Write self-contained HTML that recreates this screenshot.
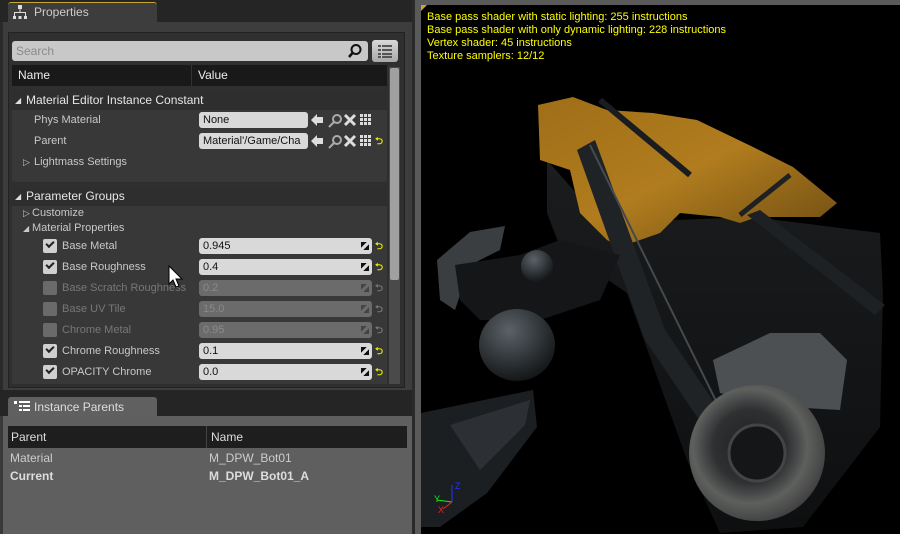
<!DOCTYPE html>
<html><head><meta charset="utf-8"><style>
*{margin:0;padding:0;box-sizing:border-box}
body{width:900px;height:534px;background:#252525;position:relative;overflow:hidden;font-family:"Liberation Sans",sans-serif;font-size:11px;color:#c8c8c8}
.a{position:absolute}
.lbl{position:absolute;white-space:nowrap;line-height:14px}
.vb{position:absolute;background:#d9d9d9;border-radius:3px;color:#111;padding-left:4px;line-height:16px;height:16px;font-size:11px;overflow:hidden;white-space:nowrap}
.vb.d{background:#6b6b6b;color:#8a8a8a}
.cb{position:absolute;width:14px;height:14px;background:#d0d0d0;border-radius:2px}
.cb.d{background:#6a6a6a}
.cb i{position:absolute;left:3px;top:2px;width:8px;height:5px;border-left:2px solid #222;border-bottom:2px solid #222;transform:rotate(-45deg)}
.sp{position:absolute;right:3px;top:4px;width:8px;height:8px;background:linear-gradient(135deg,#111 0 35%,transparent 35% 65%,#111 65%)}
.d .sp{background:linear-gradient(135deg,#444 0 35%,transparent 35% 65%,#444 65%)}
.rs{position:absolute;color:#e8e800;font-size:10px;font-weight:bold}
.rs.d{color:#777}
</style></head><body>
<div class="a" style="left:8px;top:2px;width:149px;height:21px;background:#3d3d3d;border-top:1px solid #c8a832;border-radius:3px 3px 0 0"></div>
<svg class="a" style="left:12px;top:4px" width="16" height="16"><rect x="6" y="1" width="4" height="4" fill="#ddd"/><rect x="7.5" y="5" width="1" height="4" fill="#ddd"/><rect x="2" y="8" width="12" height="1" fill="#ddd"/><rect x="2" y="8" width="1" height="4" fill="#ddd"/><rect x="13" y="8" width="1" height="4" fill="#ddd"/><rect x="1" y="12" width="3" height="3" fill="#ddd"/><rect x="6.5" y="12" width="3" height="3" fill="#ddd"/><rect x="12" y="12" width="3" height="3" fill="#ddd"/></svg>
<div class="lbl" style="left:34px;top:5px;font-size:12px;color:#ccc">Properties</div>
<div class="a" style="left:0;top:22px;width:412px;height:368px;background:#3d3d3d;border-left:3px solid #2a2a2a"></div>
<div class="a" style="left:8px;top:32px;width:397px;height:356px;background:#2f2f2f;border:1px solid #222"></div>
<div class="a" style="left:12px;top:41px;width:356px;height:20px;background:#c8c8c8;border-radius:3px"></div>
<div class="lbl" style="left:16px;top:44px;color:#8a8a8a;font-size:12px">Search</div>
<svg class="a" style="left:347px;top:43px" width="16" height="16"><circle cx="9" cy="6.5" r="4.5" fill="none" stroke="#111" stroke-width="2"/><line x1="5.5" y1="10" x2="2" y2="14" stroke="#111" stroke-width="2.5"/></svg>
<div class="a" style="left:372px;top:40px;width:26px;height:22px;background:linear-gradient(#d8d8d8,#a8a8a8);border-radius:3px"></div>
<svg class="a" style="left:378px;top:44px" width="14" height="14"><g fill="#555"><rect x="0" y="1" width="14" height="2"/><rect x="0" y="5" width="14" height="2"/><rect x="0" y="9" width="14" height="2"/><rect x="0" y="12" width="14" height="2"/></g><rect x="3" y="0" width="1" height="14" fill="#ccc"/></svg>
<div class="a" style="left:12px;top:65px;width:375px;height:21px;background:#191919"></div>
<div class="a" style="left:191px;top:65px;width:1px;height:21px;background:#333"></div>
<div class="lbl" style="left:18px;top:68px;color:#eee;font-size:12px">Name</div>
<div class="lbl" style="left:198px;top:68px;color:#eee;font-size:12px">Value</div>
<div class="a" style="left:389px;top:67px;width:11px;height:317px;background:#4a4a4a"></div>
<div class="a" style="left:390px;top:68px;width:9px;height:212px;background:#a0a0a0;border-radius:2px"></div>
<div class="a" style="left:12px;top:90px;width:375px;height:92px;background:#383838;border-radius:3px"></div>
<div class="a" style="left:12px;top:90px;width:375px;height:20px;background:#2e2e2e;border-radius:3px 3px 0 0"></div>
<div class="lbl" style="left:15px;top:94px;font-size:8px;color:#ddd">◢</div>
<div class="lbl" style="left:26px;top:93px;color:#e6e6e6;font-size:12px">Material Editor Instance Constant</div>
<div class="lbl" style="left:34px;top:113px">Phys Material</div>
<div class="vb" style="left:199px;top:112px;width:109px">None</div>
<div class="lbl" style="left:34px;top:134px">Parent</div>
<div class="vb" style="left:199px;top:133px;width:109px">Material'/Game/Cha</div>
<svg class="a" style="left:310px;top:112px" width="64" height="38"><g fill="#ddd"><path d="M1 8 L7 2 L7 5 L13 5 L13 11 L7 11 L7 14Z"/><path d="M1 29 L7 23 L7 26 L13 26 L13 32 L7 32 L7 35Z"/></g><g fill="none" stroke="#aaa" stroke-width="2"><circle cx="27" cy="7" r="4"/><line x1="24" y1="10" x2="19" y2="15"/><circle cx="27" cy="28" r="4"/><line x1="24" y1="31" x2="19" y2="36"/></g><g stroke="#ddd" stroke-width="3"><path d="M35 3 L45 13 M45 3 L35 13"/><path d="M35 24 L45 34 M45 24 L35 34"/></g><g fill="#ddd"><rect x="50" y="2" width="3" height="3"/><rect x="54" y="2" width="3" height="3"/><rect x="58" y="2" width="3" height="3"/><rect x="50" y="6" width="3" height="3"/><rect x="54" y="6" width="3" height="3"/><rect x="58" y="6" width="3" height="3"/><rect x="50" y="10" width="3" height="3"/><rect x="54" y="10" width="3" height="3"/><rect x="58" y="10" width="3" height="3"/><rect x="50" y="23" width="3" height="3"/><rect x="54" y="23" width="3" height="3"/><rect x="58" y="23" width="3" height="3"/><rect x="50" y="27" width="3" height="3"/><rect x="54" y="27" width="3" height="3"/><rect x="58" y="27" width="3" height="3"/><rect x="50" y="31" width="3" height="3"/><rect x="54" y="31" width="3" height="3"/><rect x="58" y="31" width="3" height="3"/></g></svg>
<div class="rs" style="left:375px;top:134px">⮌</div>
<div class="lbl" style="left:23px;top:155px;font-size:9px">▷</div>
<div class="lbl" style="left:34px;top:155px">Lightmass Settings</div>
<div class="a" style="left:12px;top:187px;width:375px;height:197px;background:#383838;border-radius:3px 3px 0 0"></div>
<div class="a" style="left:12px;top:187px;width:375px;height:19px;background:#2e2e2e;border-radius:3px 3px 0 0"></div>
<div class="lbl" style="left:15px;top:190px;font-size:8px;color:#ddd">◢</div>
<div class="lbl" style="left:26px;top:189px;color:#e6e6e6;font-size:12px">Parameter Groups</div>
<div class="lbl" style="left:23px;top:206px;font-size:9px">▷</div>
<div class="lbl" style="left:32px;top:206px">Customize</div>
<div class="lbl" style="left:23px;top:222px;font-size:8px">◢</div>
<div class="lbl" style="left:32px;top:221px">Material Properties</div>

<div class="cb" style="left:43px;top:239px"><i></i></div><div class="lbl" style="left:62px;top:239px">Base Metal</div><div class="vb" style="left:199px;top:238px;width:173px">0.945<span class="sp"></span></div><div class="rs" style="left:375px;top:239px">⮌</div>
<div class="cb" style="left:43px;top:260px"><i></i></div><div class="lbl" style="left:62px;top:260px">Base Roughness</div><div class="vb" style="left:199px;top:259px;width:173px">0.4<span class="sp"></span></div><div class="rs" style="left:375px;top:260px">⮌</div>
<div class="cb d" style="left:43px;top:281px"></div><div class="lbl" style="left:62px;top:281px;color:#777">Base Scratch Roughness</div><div class="vb d" style="left:199px;top:280px;width:173px">0.2<span class="sp"></span></div><div class="rs d" style="left:375px;top:281px">⮌</div>
<div class="cb d" style="left:43px;top:302px"></div><div class="lbl" style="left:62px;top:302px;color:#777">Base UV Tile</div><div class="vb d" style="left:199px;top:301px;width:173px">15.0<span class="sp"></span></div><div class="rs d" style="left:375px;top:302px">⮌</div>
<div class="cb d" style="left:43px;top:323px"></div><div class="lbl" style="left:62px;top:323px;color:#777">Chrome Metal</div><div class="vb d" style="left:199px;top:322px;width:173px">0.95<span class="sp"></span></div><div class="rs d" style="left:375px;top:323px">⮌</div>
<div class="cb" style="left:43px;top:344px"><i></i></div><div class="lbl" style="left:62px;top:344px">Chrome Roughness</div><div class="vb" style="left:199px;top:343px;width:173px">0.1<span class="sp"></span></div><div class="rs" style="left:375px;top:344px">⮌</div>
<div class="cb" style="left:43px;top:365px"><i></i></div><div class="lbl" style="left:62px;top:365px">OPACITY Chrome</div><div class="vb" style="left:199px;top:364px;width:173px">0.0<span class="sp"></span></div><div class="rs" style="left:375px;top:365px">⮌</div>
<svg class="a" style="left:168px;top:265px" width="18" height="26"><path d="M1 1 L1 19 L5 15 L8 22 L11 21 L8 14 L14 14Z" fill="#fff" stroke="#000" stroke-width="1"/></svg>
<div class="a" style="left:8px;top:397px;width:149px;height:20px;background:#606060;border-radius:3px 3px 0 0"></div>
<svg class="a" style="left:14px;top:400px" width="16" height="14"><g fill="#fff"><rect x="0" y="1" width="3" height="3"/><rect x="5" y="1" width="11" height="2"/><rect x="5" y="5" width="3" height="2"/><rect x="9" y="5" width="7" height="2"/><rect x="5" y="9" width="3" height="2"/><rect x="9" y="9" width="7" height="2"/></g></svg>
<div class="lbl" style="left:34px;top:400px;color:#ddd;font-size:12px">Instance Parents</div>
<div class="a" style="left:0;top:416px;width:412px;height:118px;background:#5f5f5f;border-left:3px solid #3a3a3a"></div>
<div class="a" style="left:8px;top:426px;width:399px;height:22px;background:#1e1e1e"></div>
<div class="a" style="left:206px;top:426px;width:1px;height:22px;background:#444"></div>
<div class="lbl" style="left:11px;top:430px;color:#ddd;font-size:12px">Parent</div>
<div class="lbl" style="left:211px;top:430px;color:#ddd;font-size:12px">Name</div>
<div class="lbl" style="left:10px;top:451px;color:#ccc;font-size:12px">Material</div>
<div class="lbl" style="left:209px;top:451px;color:#ccc;font-size:12px">M_DPW_Bot01</div>
<div class="lbl" style="left:10px;top:469px;color:#ddd;font-size:12px;font-weight:bold">Current</div>
<div class="lbl" style="left:209px;top:469px;color:#ddd;font-size:12px;font-weight:bold">M_DPW_Bot01_A</div>
<div class="a" style="left:412px;top:0;width:9px;height:534px;background:#5a5a5a;border-left:3px solid #2a2a2a"></div>
<div class="a" style="left:416px;top:0;width:484px;height:5px;background:#5a5a5a"></div>
<div class="a" style="left:421px;top:5px;width:479px;height:529px;background:#000"></div>
<svg class="a" style="left:421px;top:5px" width="479" height="529" viewBox="421 5 479 529">
<defs>
<linearGradient id="or" x1="0" y1="0" x2="1" y2="1"><stop offset="0" stop-color="#a06e18"/><stop offset=".5" stop-color="#b07c1e"/><stop offset="1" stop-color="#6a4a12"/></linearGradient>
<linearGradient id="dk" x1="0" y1="0" x2="0" y2="1"><stop offset="0" stop-color="#1a1c1e"/><stop offset="1" stop-color="#0e0f10"/></linearGradient>
<radialGradient id="wh" cx=".45" cy=".45" r=".6"><stop offset="0" stop-color="#1e2022"/><stop offset=".45" stop-color="#2e3032"/><stop offset=".7" stop-color="#5e605e"/><stop offset="1" stop-color="#3a3a3a"/></radialGradient>
<radialGradient id="ball" cx=".4" cy=".3" r=".7"><stop offset="0" stop-color="#5a6268"/><stop offset="1" stop-color="#151718"/></radialGradient>
</defs>
<polygon points="547,160 620,243 673,220 753,217 880,233 883,293 880,427 803,527 720,533 687,460 627,293 560,247 547,213" fill="url(#dk)"/>
<polygon points="538,105 573,97 607,110 653,113 697,120 753,147 793,167 837,203 820,217 757,217 740,223 720,217 680,213 660,233 620,247 607,240 580,213 570,170 540,160" fill="url(#or)"/>
<path d="M600 100 L690 175" stroke="#1a1d20" stroke-width="6"/>
<path d="M740 215 L790 175" stroke="#1e2124" stroke-width="5"/>
<polygon points="577,150 595,140 665,330 760,470 740,480 645,340" fill="#202326"/>
<line x1="590" y1="145" x2="750" y2="470" stroke="#444a4e" stroke-width="2"/>
<polygon points="747,215 760,210 885,305 875,315" fill="#1e2124"/>
<polygon points="713,360 770,333 820,333 847,360 840,410 787,407 720,393" fill="#4c5052"/>
<circle cx="757" cy="453" r="68" fill="url(#wh)"/>
<circle cx="757" cy="453" r="28" fill="#141618" stroke="#444" stroke-width="3"/>
<polygon points="437,260 470,232 505,226 500,250 470,265 455,310 440,300" fill="#3a3e40"/>
<polygon points="455,265 520,255 560,240 620,255 600,300 540,320 480,320 460,300" fill="#141618"/>
<circle cx="537" cy="266" r="16" fill="url(#ball)"/>
<ellipse cx="517" cy="345" rx="38" ry="36" fill="url(#ball)"/>
<polygon points="421,413 533,390 537,427 487,493 440,527 421,527" fill="#1c1f22"/>
<polygon points="450,425 530,400 525,425 480,470" fill="#2c3034"/>
<g font-family="Liberation Sans" font-size="9">
<line x1="452" y1="502" x2="452" y2="485" stroke="#23f" stroke-width="1"/><text x="455" y="489" fill="#23f">Z</text>
<line x1="452" y1="502" x2="437" y2="500" stroke="#1e1" stroke-width="1"/><text x="434" y="502" fill="#1e1">Y</text>
<line x1="452" y1="502" x2="443" y2="509" stroke="#e22" stroke-width="1"/><text x="438" y="513" fill="#e22">X</text>
</g>
</svg>
<div class="lbl" style="left:427px;top:11px;color:#ff0;font-size:11px;line-height:13px">Base pass shader with static lighting: 255 instructions<br>Base pass shader with only dynamic lighting: 228 instructions<br>Vertex shader: 45 instructions<br>Texture samplers: 12/12</div>
<div class="a" style="left:421px;top:5px;width:0;height:0;border-top:6px solid #c8a832;border-right:6px solid transparent"></div>
</body></html>
